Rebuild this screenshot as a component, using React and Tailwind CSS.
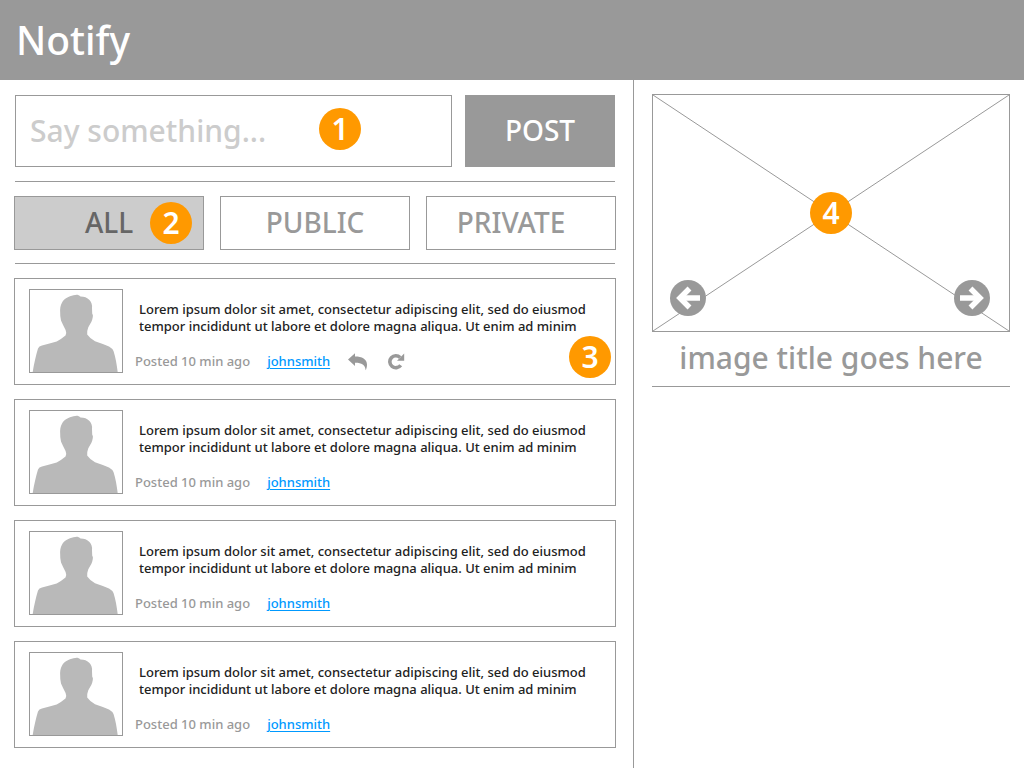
import React, { useState } from "react";

const POSTS = [1, 2, 3, 4];
const TABS = [
  { name: "ALL", pad: "" },
  { name: "PUBLIC", pad: "" },
  { name: "PRIVATE", pad: "pr-5" },
];

function Badge({ n, className }) {
  return (
    <span
      className={`pointer-events-none absolute flex size-[42px] items-center justify-center rounded-full bg-[#ff9900] text-[30px] leading-none font-semibold text-white ${className}`}
    >
      {n}
    </span>
  );
}

function Avatar() {
  return (
    <div className="h-[84px] w-[94px] shrink-0 border border-[#999999]">
      <svg viewBox="0 0 92 82" className="block h-full w-full" role="img" aria-label="johnsmith">
        <path
          fill="#b9b9b9"
          d="M2.7 82 C4 74 6 65 8 58.500 Q9 56 12 55.500 C17 54.300 22 53 26.700 51.500 Q32 48.500 35.500 45.500 Q37 43.500 35.600 40 Q33 35 31 30.500 Q30 26 30.100 20 C30.500 12.500 34 8.500 40 6.300 Q44 4.600 47.500 4.800 Q49.500 5.300 50.500 6.600 Q56 6.600 59.500 10 Q62.500 13.500 62 18 L62.200 23.500 Q63.300 25 62.800 27 Q62.300 30 61.300 32 Q59.500 35 58.200 37.500 Q56.800 41 57.200 44.500 Q60 48.500 65 51.300 Q73 54 79 56.500 Q82.500 58.500 83.500 61 C85.500 67 86.700 74 87.700 82 Z"
        />
      </svg>
    </div>
  );
}

function ReplyIcon() {
  return (
    <svg viewBox="0 0 20 18" className="h-[18px] w-5" fill="#999999" aria-hidden="true">
      <path d="M0 6.600 L7 0.300 V3.400 C14 3.400 19 6 19 11.700 C19 13.900 18.400 15.800 17.600 17.300 C17.300 11.700 13.500 9.700 7 9.800 V12.900 Z" />
    </svg>
  );
}

function RedoIcon() {
  return (
    <svg viewBox="0 0 18 18" className="size-[18px]" aria-hidden="true">
      <path d="M12.700 12.200 A6 6 0 1 1 12.100 4.500" fill="none" stroke="#999999" strokeWidth="3.600" />
      <path d="M16.200 0.500 V7.700 H9 Z" fill="#999999" />
    </svg>
  );
}

function CircleArrow({ flip }) {
  return (
    <svg viewBox="0 0 36 36" className="block size-9" aria-hidden="true">
      <circle cx="18" cy="18" r="18" fill="#999999" />
      <g transform={flip ? "translate(36 0) scale(-1 1)" : undefined} fill="none" stroke="white">
        <path d="M19.500 8.500 L10 18 L19.500 27.500" strokeWidth="5.500" />
        <path d="M10 18 H30" strokeWidth="5.500" />
      </g>
    </svg>
  );
}

function Post({ active }) {
  return (
    <article className="relative flex gap-3 border border-[#999999] px-3.5 pt-2.5 pb-[11px]">
      <Avatar />
      <div className="min-w-0 text-[13px] font-medium">
        <p className="pt-3 pl-1 leading-[17px] text-[#222222]">
          Lorem ipsum dolor sit amet, consectetur adipiscing elit, sed do eiusmod
          <br />
          tempor incididunt ut labore et dolore magna aliqua. Ut enim ad minim
        </p>
        <div className="mt-[17px] flex h-5 items-center text-[#999999]">
          <span className="mr-[17px]">Posted 10 min ago</span>
          <a href="#johnsmith" className="text-[#0099ff] underline underline-offset-2">
            johnsmith
          </a>
          {active && (
            <span className="ml-[18px] flex gap-5">
              <button type="button" aria-label="Reply">
                <ReplyIcon />
              </button>
              <button type="button" aria-label="Repost">
                <RedoIcon />
              </button>
            </span>
          )}
        </div>
      </div>
      {active && <Badge n={3} className="right-1 bottom-1.5" />}
    </article>
  );
}

export default function App() {
  const [tab, setTab] = useState("ALL");
  return (
    <div className="flex min-h-screen flex-col bg-white font-['Noto_Sans','Open_Sans',sans-serif]">
      <header className="flex h-20 items-center bg-[#999999] px-4 pb-0.5">
        <h1 className="text-[39px] leading-none font-medium text-white">Notify</h1>
      </header>
      <div className="grid flex-1 grid-cols-[634fr_390fr]">
        <main className="border-r border-[#999999] pt-[15px] pr-[17px] pb-5 pl-3.5">
          <form className="flex gap-[13px] px-px" onSubmit={(e) => e.preventDefault()}>
            <div className="relative min-w-0 flex-1">
              <input
                type="text"
                aria-label="Say something"
                placeholder="Say something..."
                className="h-[72px] w-full border border-[#999999] px-3.5 pb-0.5 text-[30px] font-medium text-[#666666] placeholder:text-[#cccccc]"
              />
              <Badge n={1} className="top-[13px] right-[91px]" />
            </div>
            <button type="submit" className="h-[72px] w-[150px] bg-[#999999] pb-0.5 text-[28px] font-medium text-white">
              POST
            </button>
          </form>
          <div className="mx-px my-3.5 border-t border-[#999999]" />
          <div className="grid grid-cols-3 gap-4">
            {TABS.map((t) => (
              <div key={t.name} className="relative">
                <button
                  type="button"
                  aria-pressed={tab === t.name}
                  onClick={() => setTab(t.name)}
                  className={`h-[54px] w-full border border-[#999999] pb-0.5 text-[28px] font-medium ${t.pad} ${
                    tab === t.name ? "bg-[#cccccc] text-[#666666]" : "text-[#999999]"
                  }`}
                >
                  {t.name}
                </button>
                {t.name === "ALL" && <Badge n={2} className="top-1.5 right-3" />}
              </div>
            ))}
          </div>
          <div className="mx-px mt-[13px] mb-3.5 border-t border-[#999999]" />
          <div className="flex flex-col gap-3.5">
            {POSTS.map((p) => (
              <Post key={p} active={p === 1} />
            ))}
          </div>
        </main>
        <aside className="pt-3.5 pr-3.5 pl-[18px]">
          <figure>
            <div className="relative h-[238px] border border-[#999999]">
              <svg
                viewBox="0 0 100 100"
                preserveAspectRatio="none"
                className="block h-full w-full"
                aria-hidden="true"
              >
                <path
                  d="M0 0 L100 100 M100 0 L0 100"
                  stroke="#999999"
                  vectorEffect="non-scaling-stroke"
                  shapeRendering="crispEdges"
                />
              </svg>
              <div className="absolute inset-0 flex items-center justify-center">
                <Badge n={4} className="" />
              </div>
              <div className="absolute inset-x-0 bottom-[15px] flex justify-between pr-[19px] pl-[17px]">
                <button type="button" aria-label="Previous image">
                  <CircleArrow />
                </button>
                <button type="button" aria-label="Next image">
                  <CircleArrow flip />
                </button>
              </div>
            </div>
            <figcaption className="border-b border-[#999999] pt-1.5 pb-2 text-center text-[30px] leading-10 font-medium text-[#999999]">
              image title goes here
            </figcaption>
          </figure>
        </aside>
      </div>
    </div>
  );
}
